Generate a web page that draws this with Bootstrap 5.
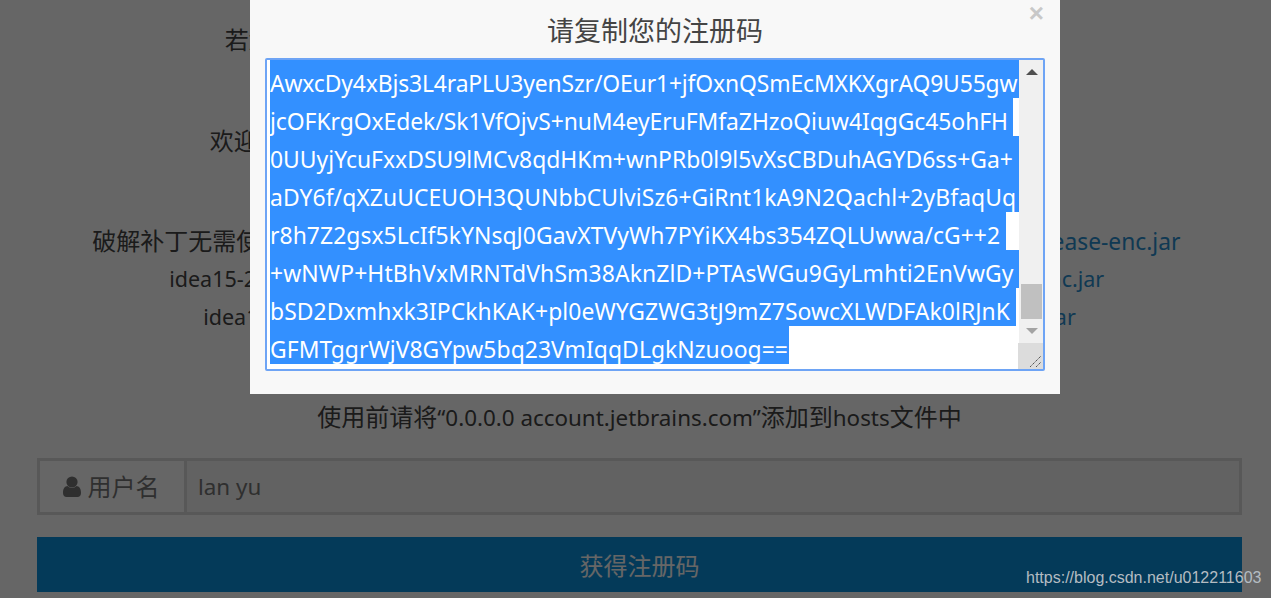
<!DOCTYPE html>
<html lang="zh">
<head>
<meta charset="utf-8">
<title>注册码</title>
<link rel="stylesheet" href="https://cdn.jsdelivr.net/npm/bootstrap@5.3.0/dist/css/bootstrap.min.css">
<style>
html,body{height:598px;overflow:hidden;background:#fff}
body{font-family:"Noto Sans","Noto Sans CJK SC",sans-serif;color:#444}
.pg-wrap{padding:0 29px 0 37px;height:598px;overflow:hidden}
.intro-line{font-size:24px;height:38px;line-height:38px;text-align:center;white-space:nowrap;margin:0}
.intro-sm{font-size:21.5px}
.l1{margin-top:21px}.l2{margin-top:63px}.l3{margin-top:62px}.l6{margin-top:62px}
.latin-sm{font-size:22.4px}
.intro-line a{color:#2a8fd0;text-decoration:none}
.intro-line a.link-md{font-size:22.8px}
.name-group{height:57px;margin-top:22px;border:3px solid #ddd;font-size:24px}
.name-addon{width:147px;border-right:3px solid #ddd;gap:6px;color:#777;padding-right:3px}
.name-field{padding-left:11px;color:#777;background:#f4f4f4;font-size:22.4px}
.get-btn{height:55px;margin-top:22px;padding-top:9px;background:#0a91de;color:#fff;font-size:24px;border:0;border-radius:0;width:100%}
.dim-layer{position:absolute;inset:0;background:rgba(0,0,0,.6)}
.dlg{position:absolute;left:250px;top:0;width:810px;height:394px;background:#f8f8f8;padding:15px}
.dlg-close{position:absolute;right:16px;top:0;font-size:26px;line-height:26px;font-weight:700;color:#c8c8c8;background:none;border:0;padding:0;font-family:"Liberation Sans",sans-serif}
.dlg-title{font-size:27px;line-height:32px;text-align:center;color:#444;margin:0 0 11px;font-weight:400}
.code-box{height:313px;border:2px solid #6ea4f5;border-radius:2px;background:#fff;overflow:hidden}
.code-lines{padding:0 0 0 3px;width:752px;flex:none}
.code-row{height:38px;font-size:22.9px;white-space:nowrap;color:#fff}
.code-row span{display:block;background:#3390ff;height:100%;padding-top:10px;line-height:28px;overflow:hidden}
.code-row .r1{width:749px;letter-spacing:-.14px}
.code-row .r2{width:743px;letter-spacing:-.06px}
.code-row .r3{width:749px}
.code-row .r4{width:749px;letter-spacing:.07px}
.code-row .r5{width:736px;letter-spacing:.05px}
.code-row .r6{width:749px;letter-spacing:.11px}
.code-row .r7{width:746px;letter-spacing:.07px}
.code-row .r8{width:519px;letter-spacing:.05px}
.sbar{width:24px;background:#f0f0f0;flex:none}
.sbar-main{height:283px;position:relative}
.sb-up,.sb-down{position:absolute;left:7px;width:0;height:0;border-left:6px solid transparent;border-right:6px solid transparent}
.sb-up{top:9px;border-bottom:6px solid #505050}
.sb-down{top:268px;border-top:6px solid #a3a3a3}
.sb-thumb{position:absolute;left:2px;top:224px;width:21px;height:35px;background:#c0c0c0}
.sb-grip{height:26px;width:25px;margin-left:-1px;background:#dcdcdc;display:block}
.wm{position:absolute;left:1026px;top:568px;font:16px/20px "Liberation Sans",sans-serif;color:#b4bcc2}
</style>
</head>
<body>
<div class="pg-wrap">
  <p class="intro-line l1">若您是第1次使用本站的服务，请先填写用户名再获取注册码，谢谢您的支持！</p>
  <p class="intro-line l2">欢迎使用本站提供的注册码生成服务，祝您工作顺利、生活愉快、身体健康！&nbsp;&nbsp;&nbsp;&nbsp;&nbsp;&nbsp;&nbsp;</p>
  <p class="intro-line l3">破解补丁无需使用注册码，下载后请在配置文件中添加一行即&nbsp;&nbsp;&nbsp;&nbsp;<a class="link-md" href="#">JetbrainsIdesCrack-4.12-release-enc.jar</a>&nbsp;</p>
  <p class="intro-line intro-sm">idea15-2018版本（含旗舰版与社区）的破解补丁下载地址为&nbsp;&nbsp;<a href="#">JetbrainsCrack-2.10-release-enc.jar</a>&nbsp;</p>
  <p class="intro-line intro-sm">idea14及更早所有版本（含旗舰版）的破解补丁下载地址为&nbsp;&nbsp;&nbsp;<a href="#">JetbrainsCrack-1.0-release.jar</a></p>
  <p class="intro-line l6">使用前请将<span class="latin-sm">“0.0.0.0 account.jetbrains.com”</span>添加到<span class="latin-sm">hosts</span>文件中</p>
  <div class="name-group d-flex">
    <div class="name-addon d-flex align-items-center justify-content-center">
      <svg width="20" height="22" viewBox="0 0 20 22" aria-hidden="true"><circle cx="10" cy="6" r="5.6" fill="#777"/><path d="M1 17c0-5 2-6.500 4.500-7 1.200 1.300 2.800 2 4.500 2s3.300-.7 4.500-2c2.500.5 4.500 2 4.500 7 0 2.500-1.500 4-3.500 4h-11c-2 0-3.500-1.500-3.500-4z" fill="#777"/></svg>
      <span>用户名</span>
    </div>
    <div class="name-field flex-grow-1 d-flex align-items-center">lan yu</div>
  </div>
  <button class="btn get-btn" type="button">获得注册码</button>
</div>
<div class="dim-layer"></div>
<div class="dlg">
  <button class="dlg-close" type="button" aria-label="关闭">×</button>
  <h5 class="dlg-title">请复制您的注册码</h5>
  <div class="code-box d-flex">
    <div class="code-lines">
      <div class="code-row"><span class="r1">AwxcDy4xBjs3L4raPLU3yenSzr/OEur1+jfOxnQSmEcMXKXgrAQ9U55gw</span></div>
      <div class="code-row"><span class="r2">jcOFKrgOxEdek/Sk1VfOjvS+nuM4eyEruFMfaZHzoQiuw4IqgGc45ohFH</span></div>
      <div class="code-row"><span class="r3">0UUyjYcuFxxDSU9lMCv8qdHKm+wnPRb0l9l5vXsCBDuhAGYD6ss+Ga+</span></div>
      <div class="code-row"><span class="r4">aDY6f/qXZuUCEUOH3QUNbbCUlviSz6+GiRnt1kA9N2Qachl+2yBfaqUq</span></div>
      <div class="code-row"><span class="r5">r8h7Z2gsx5LcIf5kYNsqJ0GavXTVyWh7PYiKX4bs354ZQLUwwa/cG++2</span></div>
      <div class="code-row"><span class="r6">+wNWP+HtBhVxMRNTdVhSm38AknZlD+PTAsWGu9GyLmhti2EnVwGy</span></div>
      <div class="code-row"><span class="r7">bSD2Dxmhxk3IPCkhKAK+pl0eWYGZWG3tJ9mZ7SowcXLWDFAk0lRJnK</span></div>
      <div class="code-row"><span class="r8">GFMTggrWjV8GYpw5bq23VmIqqDLgkNzuoog==</span></div>
    </div>
    <div class="sbar ms-auto">
      <div class="sbar-main">
        <div class="sb-up"></div>
        <div class="sb-thumb"></div>
        <div class="sb-down"></div>
      </div>
      <svg class="sb-grip" viewBox="0 0 25 26" aria-hidden="true"><path d="M12 24 23 13M18 24 23 19" stroke="#555" stroke-width="1" stroke-dasharray="1.500 .6"/></svg>
    </div>
  </div>
</div>
<div class="wm">https://blog.csdn.net/u012211603</div>
<script src="https://cdn.jsdelivr.net/npm/bootstrap@5.3.0/dist/js/bootstrap.bundle.min.js"></script>
</body>
</html>
